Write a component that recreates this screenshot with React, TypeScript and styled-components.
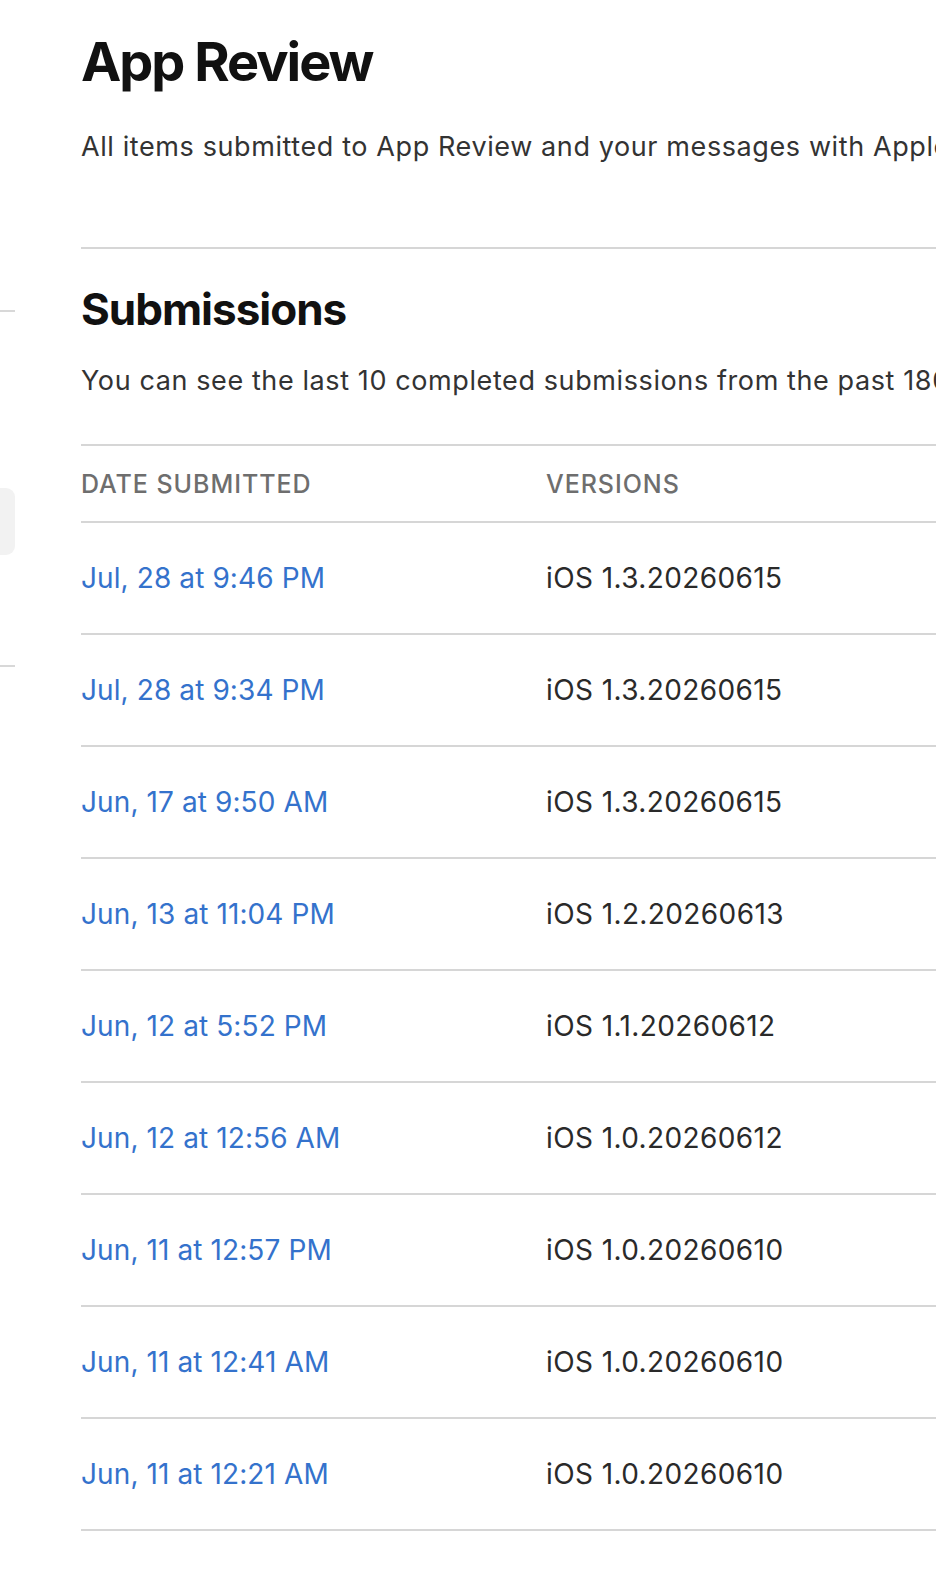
import styled, { createGlobalStyle } from 'styled-components';

const GlobalStyle = createGlobalStyle`
  html, body {
    margin: 0;
    padding: 0;
    background: #fff;
  }
  body {
    font-family: Inter, "Noto Sans", "Liberation Sans", sans-serif;
    -webkit-font-smoothing: antialiased;
  }
`;

const Page = styled.div`
  display: flex;
  width: 100%;
  min-height: 1580px;
  overflow: hidden;
`;

const Sidebar = styled.aside`
  flex: 0 0 15px;
  display: flex;
  flex-direction: column;
  padding-top: 310px;
`;

const SideRule = styled.div<{ $gap?: number }>`
  height: 2px;
  background: #d8d8d8;
  margin-top: ${props => props.$gap || 0}px;
`;

const SideActive = styled.div`
  height: 67px;
  margin-top: 176px;
  background: #f2f2f2;
  border-radius: 0 9px 9px 0;
`;

const Main = styled.main`
  flex: 1;
  min-width: 0;
  padding-left: 66px;
  overflow: hidden;
  white-space: nowrap;
`;

const Title = styled.h1`
  margin: 29px 0 0;
  font-size: 54px;
  line-height: 66px;
  font-weight: 700;
  color: #111;
  letter-spacing: -2px;
`;

const Lead = styled.p<{ $top: number }>`
  margin: ${props => props.$top}px 0 0;
  font-size: 27px;
  line-height: 38px;
  font-weight: 400;
  color: #333;
  letter-spacing: 0.6px;
`;

const Divider = styled.hr`
  margin: 81px 0 0;
  border: none;
  height: 2px;
  background: #d6d6d6;
`;

const SectionTitle = styled.h2`
  margin: 34px 0 0;
  font-size: 44px;
  line-height: 53px;
  font-weight: 700;
  color: #111;
  letter-spacing: -1px;
`;

const Table = styled.div`
  margin-top: 44px;
  border-top: 2px solid #d6d6d6;
`;

const Row = styled.div<{ $head?: boolean }>`
  display: grid;
  grid-template-columns: 461px 1fr;
  align-items: center;
  height: ${props => (props.$head ? 75 : 110)}px;
  border-bottom: 2px solid #d6d6d6;
`;

const HeadCell = styled.div`
  font-size: 25px;
  font-weight: 500;
  letter-spacing: 0.95px;
  color: #6e6e6e;
  text-transform: uppercase;
`;

const VersionHead = styled(HeadCell)`
  padding-left: 4px;
`;

const DateLink = styled.a`
  font-size: 28px;
  color: #3472cc;
  text-decoration: none;
  cursor: pointer;
  letter-spacing: 0.1px;
`;

const Version = styled.div`
  font-size: 28px;
  color: #2a2a2a;
  letter-spacing: 0.4px;
  padding-left: 4px;
`;

const submissions = [
  { date: 'Jul, 28 at 9:46 PM', version: 'iOS 1.3.20260615' },
  { date: 'Jul, 28 at 9:34 PM', version: 'iOS 1.3.20260615' },
  { date: 'Jun, 17 at 9:50 AM', version: 'iOS 1.3.20260615' },
  { date: 'Jun, 13 at 11:04 PM', version: 'iOS 1.2.20260613' },
  { date: 'Jun, 12 at 5:52 PM', version: 'iOS 1.1.20260612' },
  { date: 'Jun, 12 at 12:56 AM', version: 'iOS 1.0.20260612' },
  { date: 'Jun, 11 at 12:57 PM', version: 'iOS 1.0.20260610' },
  { date: 'Jun, 11 at 12:41 AM', version: 'iOS 1.0.20260610' },
  { date: 'Jun, 11 at 12:21 AM', version: 'iOS 1.0.20260610' },
];

export default function App() {
  return (
    <>
      <GlobalStyle />
      <Page>
        <Sidebar>
          <SideRule />
          <SideActive />
          <SideRule $gap={110} />
        </Sidebar>
        <Main>
          <Title>App Review</Title>
          <Lead $top={33}>All items submitted to App Review and your messages with Apple are shown here.</Lead>
          <Divider />
          <SectionTitle>Submissions</SectionTitle>
          <Lead $top={26}>You can see the last 10 completed submissions from the past 180 days.</Lead>
          <Table>
            <Row $head>
              <HeadCell>Date Submitted</HeadCell>
              <VersionHead>Versions</VersionHead>
            </Row>
            {submissions.map(s => (
              <Row key={s.date}>
                <DateLink>{s.date}</DateLink>
                <Version>{s.version}</Version>
              </Row>
            ))}
          </Table>
        </Main>
      </Page>
    </>
  );
}
